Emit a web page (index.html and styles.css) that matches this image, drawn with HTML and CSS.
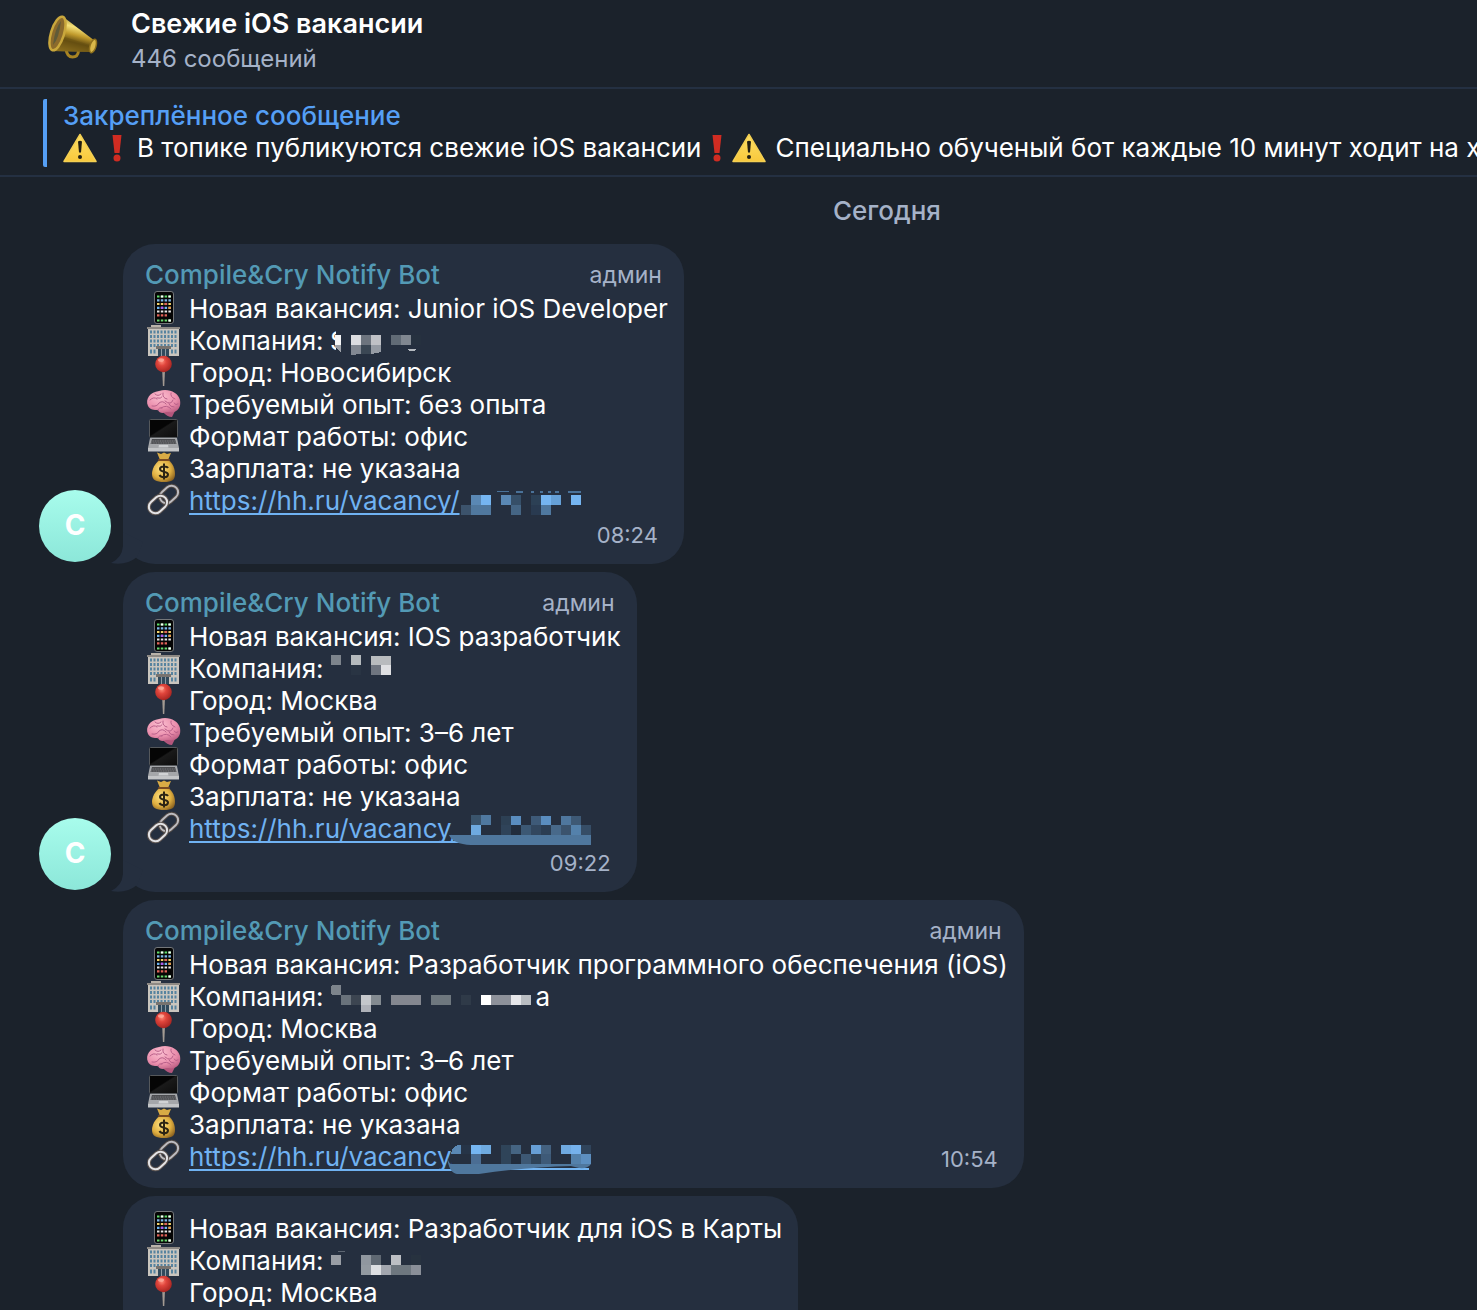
FILE: index.html
```html
<!DOCTYPE html>
<html lang="ru">
<head>
  <meta charset="UTF-8">
  <meta name="viewport" content="width=device-width, initial-scale=1.0">
  <title>Свежие iOS вакансии</title>
  <link rel="stylesheet" href="styles.css">
</head>
<body>
  <!-- Иконки -->
  <svg class="sprite" aria-hidden="true">
    <defs>
      <linearGradient id="gold" x1="0.6" y1="0" x2="0.3" y2="1">
        <stop offset="0" stop-color="#8a6f1c"/>
        <stop offset="0.3" stop-color="#f6e27a"/>
        <stop offset="0.5" stop-color="#c09a2c"/>
        <stop offset="0.7" stop-color="#5e480f"/>
        <stop offset="1" stop-color="#b08d2b"/>
      </linearGradient>
      <linearGradient id="warn" x1="0" y1="0" x2="0" y2="1">
        <stop offset="0" stop-color="#fde066"/>
        <stop offset="1" stop-color="#f8c83c"/>
      </linearGradient>
      <radialGradient id="ball" cx="0.4" cy="0.35" r="0.65">
        <stop offset="0" stop-color="#ff8a78"/>
        <stop offset="0.4" stop-color="#e0453c"/>
        <stop offset="1" stop-color="#a92622"/>
      </radialGradient>
      <radialGradient id="pink" cx="0.4" cy="0.3" r="0.8">
        <stop offset="0" stop-color="#fbbfd0"/>
        <stop offset="0.6" stop-color="#eb8fad"/>
        <stop offset="1" stop-color="#b95a80"/>
      </radialGradient>
      <linearGradient id="screen" x1="0" y1="0" x2="1" y2="1">
        <stop offset="0" stop-color="#050505"/>
        <stop offset="0.45" stop-color="#050505"/>
        <stop offset="0.5" stop-color="#1a1a1a"/>
        <stop offset="1" stop-color="#0c0c0c"/>
      </linearGradient>
      <radialGradient id="sack" cx="0.4" cy="0.4" r="0.7">
        <stop offset="0" stop-color="#ffe382"/>
        <stop offset="0.6" stop-color="#dfae3f"/>
        <stop offset="1" stop-color="#8b6220"/>
      </radialGradient>
    </defs>

    <symbol id="i-horn" viewBox="0 0 50 44">
      <path d="M18 34q1 8 6.500 8t6-6" fill="none" stroke="#a88423" stroke-width="3"/>
      <path d="M14 1L47 26L43 37L4 36Z" fill="url(#gold)"/>
      <path d="M17 22L44 31L43 37L6 36Z" fill="#6b5413" opacity=".55"/>
      <ellipse cx="9.500" cy="18.500" rx="6.500" ry="17.500" transform="rotate(17 9.500 18.500)" fill="#8b6a2c" stroke="#c9a73c" stroke-width="2.500"/>
      <path d="M13 6q-6 7-8 24q6-6 8-24z" fill="#5f5a38"/>
      <ellipse cx="45" cy="31" rx="3" ry="7" transform="rotate(17 45 31)" fill="#d9b84a" stroke="#8e701d" stroke-width="1.500"/>
    </symbol>

    <symbol id="i-warn" viewBox="0 0 34 30">
      <path d="M17 1.500L33 28.500H1Z" fill="url(#warn)" stroke="#f3cf52" stroke-width="1.500" stroke-linejoin="round"/>
      <path d="M15 8.500q2-1.500 4 0l-1 11h-2z" fill="#231f12"/>
      <circle cx="17" cy="24" r="2" fill="#231f12"/>
    </symbol>

    <symbol id="i-bang" viewBox="0 0 10 30">
      <path d="M.5 2h9L7.500 20h-5z" fill="#d02c22"/>
      <circle cx="5" cy="25" r="3.500" fill="#d02c22"/>
    </symbol>

    <symbol id="i-phone" viewBox="0 0 36 34">
      <rect x="9.500" y=".5" width="19" height="32" rx="2.500" fill="#050505" stroke="#74777a"/>
      <g stroke-width="2.200" stroke-dasharray="2.500 1.300" fill="none">
        <path d="M12 5.500h14" stroke="#5fe06a"/>
        <path d="M12 9.300h14" stroke="#7fb7e8"/>
        <path d="M12 13h14" stroke="#f3d46b"/>
        <path d="M12 16.800h14" stroke="#6fb5f2"/>
        <path d="M12 20.500h14" stroke="#e8e8e8"/>
        <path d="M12 24.300h10" stroke="#e2645a"/>
        <path d="M12 29.500h14" stroke="#69d96f"/>
      </g>
      <g stroke-width="2.200" stroke-dasharray="2.500 5.100" fill="none">
        <path d="M15.800 5.500h10" stroke="#fff"/>
        <path d="M19.600 13h6" stroke="#e2645a"/>
        <path d="M15.800 16.800h7" stroke="#b755e8"/>
        <path d="M23.400 16.800h3" stroke="#f09a3a"/>
        <path d="M23.400 29.500h3" stroke="#fff"/>
      </g>
    </symbol>

    <symbol id="i-office" viewBox="0 0 36 34">
      <rect x="6" y="2" width="10" height="2" fill="#b9b3aa"/>
      <rect x="2" y="4" width="33" height="2" fill="#8d8984"/>
      <rect x="3" y="6" width="31" height="27" fill="#c9c5be"/>
      <g stroke="#56839f" stroke-width="3" stroke-dasharray="2 1.500">
        <path d="M5 9h28M5 13.500h28M5 18h28M5 22.500h28"/>
      </g>
      <path d="M5 28.500h7M26 28.500h7" stroke="#56839f" stroke-width="4" stroke-dasharray="2 1.500"/>
      <rect x="11" y="23" width="15" height="3" fill="#77736f"/>
      <rect x="13" y="26" width="11" height="7" fill="#314a5c"/>
      <path d="M16.500 26v7M20.500 26v7" stroke="#8e9ba4"/>
    </symbol>

    <symbol id="i-pin" viewBox="0 0 36 34">
      <path d="M17.300 17h2.600l-.6 14h-1.400z" fill="#a39a92"/>
      <circle cx="18.500" cy="9" r="8.300" fill="url(#ball)"/>
      <ellipse cx="16" cy="5" rx="3" ry="1.800" fill="#ffb8aa" opacity=".7"/>
    </symbol>

    <symbol id="i-brain" viewBox="0 0 36 34">
      <path d="M18 25q4 5 9 5l3-6z" fill="#b4567c"/>
      <path d="M3 19C0 12 5 5 14 4c9-3 19 1 21 9c1 6-1 10-6 12c-3 1-5 0-8 0c-3 2-7 1-8-2c-4 0-8 0-10-4z" fill="url(#pink)"/>
      <path d="M5 13q4-4 7-1M10 7q3 3 6 0M7 19q5 1 7-3q4-3 7 1M18 6q-1 5 4 6M26 6q-1 4 4 6M20 14q6 5 8-1M16 21q6-4 10 1M29 16q2 3 4 1M13 23q1-3 4-2M24 17q1 3 5 3M12 11q4 1 5-1" fill="none" stroke="#b9608a" stroke-width="1" stroke-linecap="round"/>
    </symbol>

    <symbol id="i-laptop" viewBox="0 0 36 34">
      <rect x="4.500" y=".5" width="28" height="18" rx="1" fill="url(#screen)" stroke="#55585b"/>
      <path d="M5 19h27l2 10H3z" fill="#a5a7aa"/>
      <path d="M7 20h23l1.500 5h-26z" fill="#4c4d50"/>
      <path d="M6.500 22h24M6 24h25" stroke="#8b8d90" stroke-width=".8" stroke-dasharray="1 .7"/>
      <path d="M14 26h9l.5 2.500h-10z" fill="#d0d2d4"/>
      <path d="M3 29h31v3.500H3z" fill="#c3c5c7"/>
    </symbol>

    <symbol id="i-money" viewBox="0 0 36 34">
      <path d="M12 1.500l4 1.500 3-1.500 3 1.500 4-1-3 7h-8z" fill="#d9ab45"/>
      <path d="M15 9h8c5 3 7 9 7 14c0 6-3 8-11 8S7 29 7 23c0-5 3-11 8-14z" fill="url(#sack)"/>
      <path d="M14 9h10" stroke="#7a4b22" stroke-width="2" stroke-linecap="round"/>
      <path d="M23 17c-1-2-8-2.500-8 1s8 2 8 5.500s-7 3.500-8.500.5M19 12.500v16" fill="none" stroke="#2c2414" stroke-width="2"/>
    </symbol>

    <symbol id="i-link" viewBox="0 0 36 34">
      <g fill="none">
        <rect x="14" y="5" width="20" height="13" rx="6.500" transform="rotate(-42 24 11.500)" stroke="#4d4643" stroke-width="4"/>
        <rect x="14" y="5" width="20" height="13" rx="6.500" transform="rotate(-42 24 11.500)" stroke="#bdbcc0" stroke-width="2"/>
        <rect x="3" y="15" width="20" height="13" rx="6.500" transform="rotate(-42 13 21.500)" stroke="#5b5350" stroke-width="4"/>
        <rect x="3" y="15" width="20" height="13" rx="6.500" transform="rotate(-42 13 21.500)" stroke="#e4e4e7" stroke-width="2"/>
      </g>
    </symbol>

    <symbol id="i-tail" viewBox="0 0 40 32">
      <path d="M12 0V14Q11 26 0 31Q15 34 26 25L32 10Z" fill="#252f3f"/>
    </symbol>
  </svg>

  <header class="header">
    <svg class="header-icon"><use href="#i-horn"/></svg>
    <div>
      <h1 class="header-title">Свежие iOS вакансии</h1>
      <p class="header-count">446 сообщений</p>
    </div>
  </header>

  <section class="pinned">
    <div class="pinned-body">
      <h2 class="pinned-title">Закреплённое сообщение</h2>
      <p class="pinned-text">
        <svg class="warn"><use href="#i-warn"/></svg>
        <svg class="bang"><use href="#i-bang"/></svg>
        <span>В топике публикуются свежие iOS вакансии</span>
        <svg class="bang"><use href="#i-bang"/></svg>
        <svg class="warn"><use href="#i-warn"/></svg>
        <span>Специально обученый бот каждые 10 минут ходит на х</span>
      </p>
    </div>
  </section>

  <main class="chat">
    <p class="date">Сегодня</p>

    <article class="message">
      <div class="avatar">C</div>
      <div class="bubble">
        <svg class="tail"><use href="#i-tail"/></svg>
        <div class="bubble-head">
          <span class="author">Compile&amp;Cry Notify Bot</span>
          <span class="role">админ</span>
        </div>
        <p class="row"><svg class="icon"><use href="#i-phone"/></svg>Новая вакансия: Junior iOS Developer</p>
        <p class="row"><svg class="icon"><use href="#i-office"/></svg>Компания:
          <svg class="mosaic" width="90" height="32" shape-rendering="crispEdges">
            <clipPath id="s-clip"><rect width="5" height="32"/></clipPath>
            <text x="-1" y="25" class="mosaic-text" clip-path="url(#s-clip)">S</text>
            <path d="M4 10h6v17l-6-5z" fill="#f4f5f6"/>
            <path d="M4 20h6v7l-6-5z" fill="#9ca1a8"/>
            <path d="M20 10h10v10H20z" fill="#dcdde1"/>
            <path d="M30 10h10v10H30z" fill="#6d747e"/>
            <path d="M40 10h10v10H40z" fill="#bfc1c6"/>
            <path d="M20 20h10v9l-10 1z" fill="#828892"/>
            <path d="M30 20h10v9H30z" fill="#3b4754"/>
            <path d="M40 20h10v7l-10 2z" fill="#959ba4"/>
            <path d="M60 10h10v10H60z" fill="#616b76"/>
            <path d="M70 10h10v10H70z" fill="#808790"/>
            <path d="M80 10h10v10H80z" fill="#26313f"/>
            <path d="M76 24h9l-2 2h-4z" fill="#b5bac0"/>
          </svg>
        </p>
        <p class="row"><svg class="icon"><use href="#i-pin"/></svg>Город: Новосибирск</p>
        <p class="row"><svg class="icon"><use href="#i-brain"/></svg>Требуемый опыт: без опыта</p>
        <p class="row"><svg class="icon"><use href="#i-laptop"/></svg>Формат работы: офис</p>
        <p class="row"><svg class="icon"><use href="#i-money"/></svg>Зарплата: не указана</p>
        <p class="row"><svg class="icon"><use href="#i-link"/></svg><a class="link" href="https://hh.ru/vacancy/">https://hh.ru/vacancy/</a>
          <svg class="mosaic mosaic-link" width="144" height="34" shape-rendering="crispEdges">
            <path d="M14 20h10v10H14z" fill="#3c536c"/>
            <path d="M24 10h10v10H24z" fill="#5a88b4"/>
            <path d="M34 10h10v10H34z" fill="#75b5f1"/>
            <path d="M24 20h20v10H24z" fill="#50789e"/>
            <path d="M54 10h10v10H54z" fill="#5a88b4"/>
            <path d="M64 10h10v10H64z" fill="#364f68"/>
            <path d="M64 20h10v10H64z" fill="#456584"/>
            <path d="M84 10h10v10H84z" fill="#2c4055"/>
            <path d="M94 10h10v10H94z" fill="#75b5f1"/>
            <path d="M104 10h10v10h-10z" fill="#65a0d7"/>
            <path d="M84 20h10v10H84z" fill="#293a50"/>
            <path d="M94 20h10v10H94z" fill="#4f789f"/>
            <path d="M124 10h10v10h-10z" fill="#75b5f1"/>
            <path d="M50 6h12v1H50zM69 6h7v2h-7zM84 6h3v2h-3zM93 6h3v2h-3zM101 6h3v2h-3zM108 6h4v2h-4zM121 6h13v2h-13z" fill="#4a7299"/>
          </svg>
        </p>
        <time class="time">08:24</time>
      </div>
    </article>

    <article class="message">
      <div class="avatar">C</div>
      <div class="bubble">
        <svg class="tail"><use href="#i-tail"/></svg>
        <div class="bubble-head">
          <span class="author">Compile&amp;Cry Notify Bot</span>
          <span class="role">админ</span>
        </div>
        <p class="row"><svg class="icon"><use href="#i-phone"/></svg>Новая вакансия: IOS разработчик</p>
        <p class="row"><svg class="icon"><use href="#i-office"/></svg>Компания:
          <svg class="mosaic" width="60" height="32" shape-rendering="crispEdges">
            <path d="M0 2h10v10H0z" fill="#7d848c"/>
            <path d="M20 2h10v10H20z" fill="#b5babd"/>
            <path d="M20 12h10v10H20z" fill="#293443"/>
            <path d="M40 3h20v9H40z" fill="#b8bbbe"/>
            <path d="M40 12h10v10H40z" fill="#6f7580"/>
            <path d="M50 12h10v10H50z" fill="#dfe0e3"/>
          </svg>
        </p>
        <p class="row"><svg class="icon"><use href="#i-pin"/></svg>Город: Москва</p>
        <p class="row"><svg class="icon"><use href="#i-brain"/></svg>Требуемый опыт: 3–6 лет</p>
        <p class="row"><svg class="icon"><use href="#i-laptop"/></svg>Формат работы: офис</p>
        <p class="row"><svg class="icon"><use href="#i-money"/></svg>Зарплата: не указана</p>
        <p class="row"><svg class="icon"><use href="#i-link"/></svg><a class="link" href="https://hh.ru/vacancy/">https://hh.ru/vacancy/</a>
          <svg class="mosaic mosaic-link" width="144" height="34" shape-rendering="crispEdges">
            <path d="M24 2h10v10H24z" fill="#3a546c"/>
            <path d="M34 2h10v10H34z" fill="#4f789f"/>
            <path d="M54 3h10v9H54z" fill="#2d4054"/>
            <path d="M64 3h10v9H64zM94 3h10v9H94z" fill="#5a8dbf"/>
            <path d="M84 3h10v9H84z" fill="#3e5a78"/>
            <path d="M114 3h10v9h-10z" fill="#4f779e"/>
            <path d="M124 3h10v9h-10z" fill="#3e5975"/>
            <path d="M24 12h10v10H24z" fill="#6eaae0"/>
            <path d="M54 12h10v10H54z" fill="#2f4359"/>
            <path d="M64 12h10v10H64z" fill="#222d3d"/>
            <path d="M74 12h10v10H74z" fill="#3c5874"/>
            <path d="M84 12h10v10H84z" fill="#32475f"/>
            <path d="M94 12h10v10H94z" fill="#2b3d52"/>
            <path d="M104 12h10v10h-10z" fill="#48698a"/>
            <path d="M114 12h10v10h-10z" fill="#3b536d"/>
            <path d="M124 12h10v10h-10z" fill="#5481ab"/>
            <path d="M134 12h10v10h-10z" fill="#364d66"/>
            <path d="M5 3h12v19H5z" fill="#252f3f"/>
            <path d="M2 22h142v10H24Q6 31 2 22z" fill="#4f779d" shape-rendering="auto"/>
          </svg>
        </p>
        <time class="time">09:22</time>
      </div>
    </article>

    <article class="message">
      <div class="avatar-space"></div>
      <div class="bubble">
        <div class="bubble-head">
          <span class="author">Compile&amp;Cry Notify Bot</span>
          <span class="role">админ</span>
        </div>
        <p class="row"><svg class="icon"><use href="#i-phone"/></svg>Новая вакансия: Разработчик программного обеспечения (iOS)</p>
        <p class="row"><svg class="icon"><use href="#i-office"/></svg>Компания:
          <svg class="mosaic" width="200" height="32" shape-rendering="crispEdges">
            <path d="M0 7q0-3 3-3h7v10H3q-3 0-3-3z" fill="#7d848c"/>
            <path d="M10 14h10v10H10z" fill="#69727b"/>
            <path d="M20 14h10v10H20z" fill="#3c4551"/>
            <path d="M30 14h10v10H30z" fill="#c4c7cb"/>
            <path d="M40 14h10v10H40z" fill="#838a90"/>
            <path d="M30 24h10v7H30z" fill="#aeb1b8"/>
            <path d="M60 14h30v10H60z" fill="#84878f"/>
            <path d="M100 14h20v10h-20z" fill="#6e777e"/>
            <path d="M130 14h10v10h-10z" fill="#2f3a48"/>
            <path d="M150 14h10v10h-10z" fill="#fff"/>
            <path d="M160 14h20v10h-20z" fill="#8d919a"/>
            <path d="M180 14h10v10h-10z" fill="#e5e6e9"/>
            <path d="M190 14h10v10h-10z" fill="#b9bdc1"/>
          </svg>
          <span class="rest">а</span>
        </p>
        <p class="row"><svg class="icon"><use href="#i-pin"/></svg>Город: Москва</p>
        <p class="row"><svg class="icon"><use href="#i-brain"/></svg>Требуемый опыт: 3–6 лет</p>
        <p class="row"><svg class="icon"><use href="#i-laptop"/></svg>Формат работы: офис</p>
        <p class="row"><svg class="icon"><use href="#i-money"/></svg>Зарплата: не указана</p>
        <p class="row"><svg class="icon"><use href="#i-link"/></svg><a class="link" href="https://hh.ru/vacancy/">https://hh.ru/vacancy/</a>
          <svg class="mosaic mosaic-link" width="144" height="34" shape-rendering="crispEdges">
            <path d="M5 4h12v19H5z" fill="#252f3f"/>
            <path d="M4 13q1-9 10-9v9z" fill="#5a88b4"/>
            <path d="M14 4h10v9H14z" fill="#263447"/>
            <path d="M24 4h10v9H24z" fill="#75b5f1"/>
            <path d="M34 4h10v9H34z" fill="#6eaae0"/>
            <path d="M54 4h10v19H54z" fill="#2f4459"/>
            <path d="M64 4h10v9H64z" fill="#456482"/>
            <path d="M84 4h10v9H84z" fill="#679fd6"/>
            <path d="M94 4h10v9H94z" fill="#44617f"/>
            <path d="M114 4h10v9h-10z" fill="#6fa9e0"/>
            <path d="M124 4h10v9h-10z" fill="#75b1ec"/>
            <path d="M134 4h10v9h-10z" fill="#30445b"/>
            <path d="M24 13h10v10H24z" fill="#4b6d93"/>
            <path d="M64 13h10v10H64z" fill="#222d3d"/>
            <path d="M74 13h10v10H74z" fill="#3d5874"/>
            <path d="M84 13h10v10H84z" fill="#2f4358"/>
            <path d="M94 13h10v10H94z" fill="#3e5a78"/>
            <path d="M124 13h10v10h-10z" fill="#5481ab"/>
            <path d="M134 13h10v10h-10z" fill="#5d8fc0"/>
            <path d="M20 27h122v2H20z" fill="#75b5f1"/>
            <path d="M0 16Q2 23 4 23H144Q141 28 132 27L124 25Q80 26 32 33H10Q2 32 0 16z" fill="#4f779d" shape-rendering="auto"/>
          </svg>
          <time class="time time-inline">10:54</time>
        </p>
      </div>
    </article>

    <article class="message">
      <div class="avatar-space"></div>
      <div class="bubble bubble-last">
        <p class="row"><svg class="icon"><use href="#i-phone"/></svg>Новая вакансия: Разработчик для iOS в Карты</p>
        <p class="row"><svg class="icon"><use href="#i-office"/></svg>Компания:
          <svg class="mosaic" width="90" height="32" shape-rendering="crispEdges">
            <path d="M7 6h7v1H7z" fill="#5d6672"/>
            <path d="M0 10h10v10H0z" fill="#999ea5"/>
            <path d="M30 10h10v10H30z" fill="#90979f"/>
            <path d="M40 10h10v10H40z" fill="#5f6872"/>
            <path d="M60 10h10v10H60z" fill="#bcbfc4"/>
            <path d="M80 10h10v10H80z" fill="#27323f"/>
            <path d="M30 20h10v10H30z" fill="#939aa1"/>
            <path d="M40 20h10v10H40z" fill="#dddfe2"/>
            <path d="M50 20h10v10H50z" fill="#a2a6ae"/>
            <path d="M60 20h20v10H60z" fill="#6e777f"/>
            <path d="M80 20h10v10H80z" fill="#8a8f98"/>
          </svg>
        </p>
        <p class="row"><svg class="icon"><use href="#i-pin"/></svg>Город: Москва</p>
      </div>
    </article>
  </main>
</body>
</html>
```

FILE: styles.css
```css
:root {
  --bg: #1b222b;
  --bubble: #252f3f;
  --line: #243042;
  --text: #fff;
  --muted: #a5b2c8;
  --accent: #559ff5;
  --author: #539ab5;
  --link: #70b2f2;
}

* {
  box-sizing: border-box;
}

body {
  display: flex;
  flex-direction: column;
  margin: 0;
  height: 100vh;
  overflow: hidden;
  background-color: var(--bg);
  color: var(--text);
  font-family: Inter, "Liberation Sans", sans-serif;
  font-size: 26px;
  line-height: 32px;
}

h1, h2, p {
  margin: 0;
}

.sprite {
  position: absolute;
  width: 0;
  height: 0;
}

/* Шапка */
.header {
  display: flex;
  align-items: flex-start;
  gap: 33px;
  padding: 7px 48px 10px;
  border-bottom: 2px solid var(--line);
}

.header-icon {
  width: 50px;
  height: 44px;
  margin-top: 8px;
}

.header-title {
  font-size: 27px;
  font-weight: 600;
  line-height: 34px;
}

.header-count {
  color: var(--muted);
  font-size: 24px;
  line-height: 36px;
}

/* Закреплённое сообщение */
.pinned {
  padding: 10px 0 8px 43px;
  border-bottom: 2px solid var(--line);
}

.pinned-body {
  padding: 1px 0 3px 16px;
  border-left: 4px solid var(--accent);
  border-radius: 2px;
  overflow: hidden;
}

.pinned-title {
  color: var(--accent);
  font-size: 26px;
  font-weight: 500;
}

.pinned-text {
  display: flex;
  align-items: center;
  gap: 10px;
  white-space: nowrap;
}

.pinned-text svg,
.pinned-text span {
  flex-shrink: 0;
}

.warn {
  width: 34px;
  height: 30px;
}

.bang {
  width: 10px;
  height: 30px;
}

.warn + .bang {
  margin: 0 5px;
}

/* Лента */
.chat {
  display: flex;
  flex: 1;
  flex-direction: column;
  gap: 8px;
  min-height: 0;
  padding: 18px 39px 0;
  overflow: hidden;
}

.date {
  padding-left: 297px;
  margin: 0 -39px 9px;
  color: var(--muted);
  font-weight: 500;
  text-align: center;
}

.message {
  display: flex;
  flex-shrink: 0;
  align-items: flex-end;
  gap: 12px;
}

.avatar,
.avatar-space {
  flex-shrink: 0;
  width: 72px;
}

.avatar {
  height: 72px;
  margin-bottom: 2px;
  border-radius: 50%;
  background: linear-gradient(#a8fcec, #8ce7d9);
  font-size: 28px;
  font-weight: 700;
  line-height: 70px;
  text-align: center;
}

.bubble {
  position: relative;
  padding: 17px 16px 15px 22px;
  border-radius: 32px;
  background-color: var(--bubble);
}

.bubble-last {
  min-height: 288px;
}

.tail {
  position: absolute;
  left: -12px;
  bottom: 0;
  width: 40px;
  height: 32px;
}

.bubble-head {
  display: flex;
  justify-content: space-between;
  line-height: 28px;
  padding: 0 6px 4px 0;
}

.author {
  color: var(--author);
  font-weight: 500;
}

.role {
  color: var(--muted);
  font-size: 23px;
}

.row {
  display: flex;
  height: 32px;
  white-space: nowrap;
}

.icon {
  flex-shrink: 0;
  width: 36px;
  height: 34px;
  margin: -2px 8px 0 0;
}

.link {
  color: var(--link);
  text-decoration: underline;
  text-decoration-thickness: 2px;
  text-decoration-skip-ink: none;
  text-underline-offset: 3px;
}

.mosaic {
  flex-shrink: 0;
  margin-left: 7px;
}

.mosaic-link {
  position: relative;
  margin-left: -13px;
}

.mosaic-text {
  fill: var(--text);
}

.rest {
  margin-left: 5px;
}

.time {
  display: block;
  padding: 5px 10px 0 0;
  color: var(--muted);
  font-size: 22px;
  line-height: 27px;
  text-align: right;
}

.time-inline {
  margin-left: auto;
}
```
